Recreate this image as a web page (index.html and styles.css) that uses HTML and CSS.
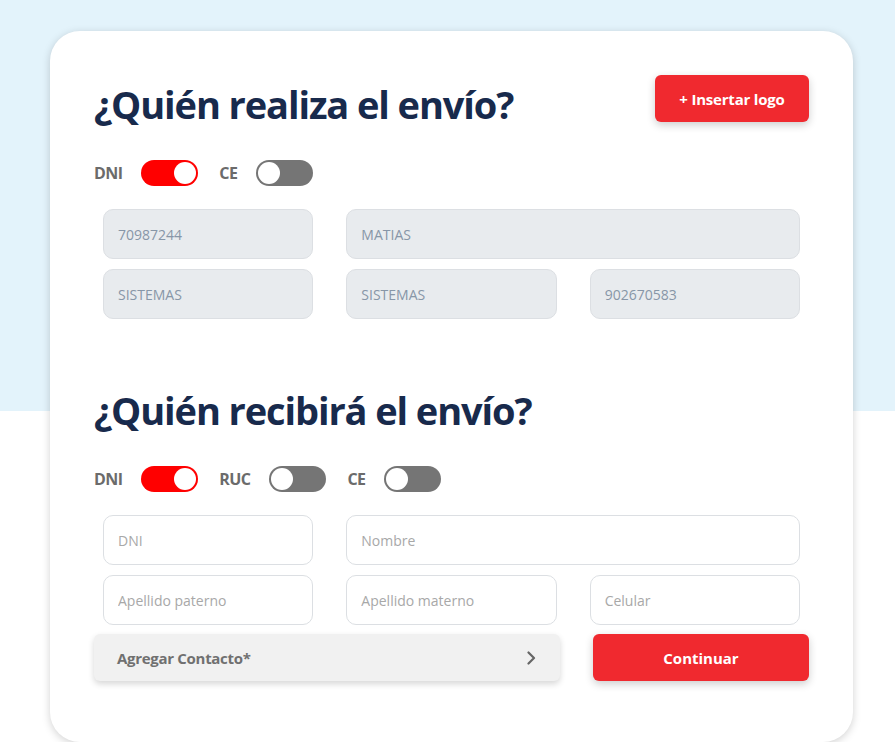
FILE: index.html
```html
<!DOCTYPE html>
<html lang="es">
<head>
  <meta charset="UTF-8">
  <title>Envío</title>
  <meta name="viewport" content="width=device-width, initial-scale=1.0">
  <link rel="stylesheet" href="styles.css">
</head>
<body>

  <div class="card">
    <div class="header">
      <h1>¿Quién realiza el envío?</h1>
      <button class="btn btn-logo">+ Insertar logo</button>
    </div>

    <div class="doc-types">
      <span class="doc-label">DNI</span>
      <span class="switch on"></span>
      <span class="doc-label">CE</span>
      <span class="switch"></span>
    </div>

    <div class="fields">
      <input type="text" value="70987244" disabled>
      <input type="text" class="wide" value="MATIAS" disabled>
      <input type="text" value="SISTEMAS" disabled>
      <input type="text" value="SISTEMAS" disabled>
      <input type="text" value="902670583" disabled>
    </div>

    <h1 class="second">¿Quién recibirá el envío?</h1>

    <div class="doc-types">
      <span class="doc-label">DNI</span>
      <span class="switch on"></span>
      <span class="doc-label">RUC</span>
      <span class="switch"></span>
      <span class="doc-label">CE</span>
      <span class="switch"></span>
    </div>

    <div class="fields">
      <input type="text" placeholder="DNI">
      <input type="text" class="wide" placeholder="Nombre">
      <input type="text" placeholder="Apellido paterno">
      <input type="text" placeholder="Apellido materno">
      <input type="text" placeholder="Celular">
    </div>

    <div class="actions">
      <button class="contact">
        <span>Agregar Contacto*</span>
        <svg width="10" height="14" viewBox="0 0 10 14"><path d="M2.5 1.5 L8 7 L2.5 12.5" fill="none" stroke="#666" stroke-width="2.2" stroke-linecap="round" stroke-linejoin="round"/></svg>
      </button>
      <button class="btn btn-next">Continuar</button>
    </div>
  </div>

</body>
</html>
```

FILE: styles.css
```css
html {
  background: #fff linear-gradient(#e3f3fb 0, #e3f3fb 411px, #fff 411px) no-repeat;
}
body {
  margin: 0;
  font-family: "Open Sans", "Noto Sans", sans-serif;
}
.card {
  width: 715px;
  margin: 31px 0 0 50px;
  padding: 44px 44px 61px;
  background: #fff;
  border-radius: 30px;
  box-shadow: 0 2px 8px rgba(0, 0, 0, 0.18);
}
.header {
  display: flex;
  justify-content: space-between;
  align-items: flex-start;
}
h1 {
  margin: 0;
  font-size: 38px;
  line-height: 48px;
  font-weight: 700;
  color: #182a4c;
  letter-spacing: -1.1px;
}
.header h1 {
  margin-top: 5px;
}
h1.second {
  margin-top: 67px;
}
.btn {
  border: none;
  border-radius: 6px;
  background: #f0292f;
  color: #fff;
  font-family: inherit;
  font-weight: 700;
  font-size: 15px;
  box-shadow: 0 3px 8px rgba(0, 0, 0, 0.2);
  cursor: pointer;
}
.btn-logo {
  width: 154px;
  height: 47px;
  letter-spacing: -0.2px;
}
.doc-types {
  display: flex;
  align-items: center;
  margin-top: 32px;
  height: 26px;
}
.doc-label {
  font-size: 16px;
  font-weight: 700;
  color: #6b6b6b;
  margin-right: 19px;
  letter-spacing: -0.6px;
}
.switch {
  position: relative;
  width: 57px;
  height: 26px;
  border-radius: 13px;
  background: #757575;
  margin-right: 21px;
}
.switch::after {
  content: "";
  position: absolute;
  top: 2px;
  left: 2px;
  width: 22px;
  height: 22px;
  border-radius: 50%;
  background: #fff;
}
.switch.on {
  background: #ff0000;
}
.switch.on::after {
  left: 33px;
}
.fields {
  display: grid;
  grid-template-columns: repeat(3, 1fr);
  column-gap: 33px;
  row-gap: 10px;
  margin: 23px 9px 0;
}
.fields .wide {
  grid-column: span 2;
}
.fields input {
  height: 50px;
  box-sizing: border-box;
  border: 1px solid #dcdfe3;
  border-radius: 10px;
  padding: 0 14px;
  font-family: inherit;
  font-size: 14px;
  color: #333;
  background: #fff;
  min-width: 0;
}
.fields input:disabled {
  background: #e8ebee;
  color: #8796a7;
}
.fields input::placeholder {
  color: #a8a8a8;
}
.actions {
  display: flex;
  gap: 33px;
  margin-top: 9px;
}
.contact {
  flex: 1;
  height: 47px;
  display: flex;
  align-items: center;
  justify-content: space-between;
  padding: 0 24px 0 23px;
  border: none;
  border-radius: 6px;
  background: #f1f1f1;
  box-shadow: 0 3px 6px rgba(0, 0, 0, 0.16);
  font-family: inherit;
  font-size: 15px;
  font-weight: 700;
  letter-spacing: -0.3px;
  color: #707070;
  cursor: pointer;
}
.btn-next {
  width: 216px;
  height: 47px;
  font-size: 15px;
}
```
